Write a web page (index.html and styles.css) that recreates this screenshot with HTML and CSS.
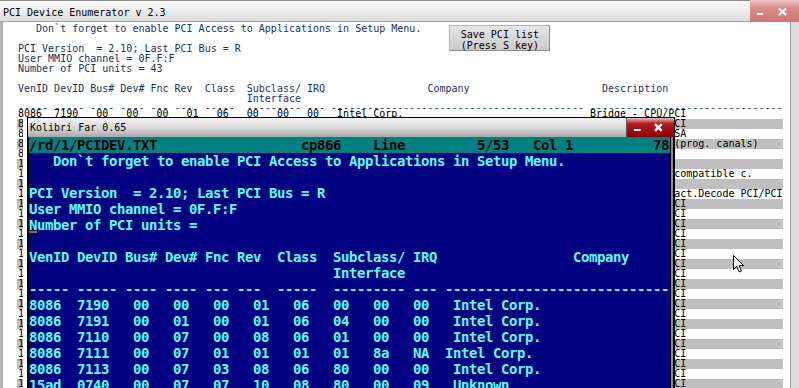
FILE: index.html
```html
<!DOCTYPE html>
<html>
<head>
<meta charset="utf-8">
<link rel="stylesheet" href="styles.css">
</head>
<body>
<div class="desk">
  <div class="win">
    <div class="tbar">
      <span class="ttl">PCI Device Enumerator v 2.3</span>
      <svg class="wbtn" width="49" height="22" viewBox="0 0 49 22">
        <rect x="7" y="13" width="6" height="2" fill="#fff"/>
        <path d="M29 8.5 L36 15 M36 8.5 L29 15" stroke="#fff" stroke-width="2.2"/>
      </svg>
    </div>
    <div class="frame">
      <div class="panel">
        <div class="ln first"><span>   Don`t forget to enable PCI Access to Applications in Setup Menu.</span><button class="save">Save PCI list
(Press S key)</button></div>
        <div class="ln"> </div>
        <div class="ln">PCI Version  = 2.10; Last PCI Bus = R</div>
        <div class="ln">User MMIO channel = 0F.F:F</div>
        <div class="ln">Number of PCI units = 43</div>
        <div class="ln"> </div>
        <div class="ln"><span class="hc1">VenID DevID Bus# Dev# Fnc Rev  Class  Subclass/ IRQ</span><span class="hc2">Company</span><span>Description</span></div>
        <div class="ln">                                      Interface</div>
        <div class="ln dash">----- ----- ---- ---- --- ---  -----  --------- --- ------------------------------------------ --------------------------------</div>
        <div class="rows">
          <div class="row"><span class="m">8086  7190   00   00   00   01   06   00   00   00   Intel Corp.</span><span>Bridge - CPU/PCI</span></div>
          <div class="row"><span class="m">8086  7191   00   01   00   01   06   04   00   00   Intel Corp.</span><span>Bridge - PCI/PCI</span></div>
          <div class="row"><span class="m">8086  7110   00   07   00   08   06   01   00   00   Intel Corp.</span><span>Bridge - PCI/ISA</span></div>
          <div class="row"><span class="m">8086  7111   00   07   01   01   01   01   8a   NA  Intel Corp.</span><span>Storage - IDE (prog. canals)</span></div>
          <div class="row"><span class="m">8086  7113   00   07   03   08   06   80   00   00   Intel Corp.</span><span>Bridge - Other</span></div>
          <div class="row"><span class="m">15ad  0740   00   07   07   10   08   80   00   09   Unknown</span><span>Unknown device</span></div>
          <div class="row"><span class="m">15ad  0405   00   0f   00   00   03   00   00   0b   VMware</span><span>Display - VGA compatible c.</span></div>
          <div class="row"><span class="m">15ad  0790   00   10   00   02   01   00   00   0b   VMware</span><span>Unknown device</span></div>
          <div class="row"><span class="m">15ad  0790   00   11   00   02   06   04   01   00   VMware</span><span>Bridge - Subtract.Decode PCI/PCI</span></div>
          <div class="row"><span class="m">15ad  07a0   00   15   00   01   06   04   00   00   VMware</span><span>Bridge - PCI/PCI</span></div>
          <div class="row"><span class="m">15ad  07a0   00   15   01   01   06   04   00   00   VMware</span><span>Bridge - PCI/PCI</span></div>
          <div class="row"><span class="m">15ad  07a0   00   15   02   01   06   04   00   00   VMware</span><span>Bridge - PCI/PCI</span></div>
          <div class="row"><span class="m">15ad  07a0   00   15   03   01   06   04   00   00   VMware</span><span>Bridge - PCI/PCI</span></div>
          <div class="row"><span class="m">15ad  07a0   00   15   04   01   06   04   00   00   VMware</span><span>Bridge - PCI/PCI</span></div>
          <div class="row"><span class="m">15ad  07a0   00   15   05   01   06   04   00   00   VMware</span><span>Bridge - PCI/PCI</span></div>
          <div class="row"><span class="m">15ad  07a0   00   15   06   01   06   04   00   00   VMware</span><span>Bridge - PCI/PCI</span></div>
          <div class="row"><span class="m">15ad  07a0   00   15   07   01   06   04   00   00   VMware</span><span>Bridge - PCI/PCI</span></div>
          <div class="row"><span class="m">15ad  07a0   00   16   00   01   06   04   00   00   VMware</span><span>Bridge - PCI/PCI</span></div>
          <div class="row"><span class="m">15ad  07a0   00   16   01   01   06   04   00   00   VMware</span><span>Bridge - PCI/PCI</span></div>
          <div class="row"><span class="m">15ad  07a0   00   16   02   01   06   04   00   00   VMware</span><span>Bridge - PCI/PCI</span></div>
          <div class="row"><span class="m">15ad  07a0   00   16   03   01   06   04   00   00   VMware</span><span>Bridge - PCI/PCI</span></div>
          <div class="row"><span class="m">15ad  07a0   00   16   04   01   06   04   00   00   VMware</span><span>Bridge - PCI/PCI</span></div>
          <div class="row"><span class="m">15ad  07a0   00   16   05   01   06   04   00   00   VMware</span><span>Bridge - PCI/PCI</span></div>
          <div class="row"><span class="m">15ad  07a0   00   16   06   01   06   04   00   00   VMware</span><span>Bridge - PCI/PCI</span></div>
          <div class="row"><span class="m">15ad  07a0   00   16   07   01   06   04   00   00   VMware</span><span>Bridge - PCI/PCI</span></div>
          <div class="row"><span class="m">15ad  07a0   00   17   00   01   06   04   00   00   VMware</span><span>Bridge - PCI/PCI</span></div>
          <div class="row"><span class="m">15ad  07a0   00   17   01   01   06   04   00   00   VMware</span><span>Bridge - PCI/PCI</span></div>
          <div class="row"><span class="m">15ad  07a0   00   17   02   01   06   04   00   00   VMware</span><span>Bridge - PCI/PCI</span></div>
        </div>
      </div>
      <div class="rframe"></div>
    </div>
  </div>

  <div class="far">
    <div class="ftbar">
      <span class="fttl">Kolibri Far 0.65</span>
      <svg class="fbtn" width="48" height="19" viewBox="0 0 48 19">
        <rect x="7" y="11" width="7" height="2" fill="#fff"/>
        <path d="M28.5 6 L35.5 13 M35.5 6 L28.5 13" stroke="#fff" stroke-width="2.4"/>
      </svg>
    </div>
    <div class="fbody">
      <div class="fmain">
        <div class="status">/rd/1/PCIDEV.TXT                  cp866    Line         5/53   Col 1          78</div>
        <div class="fl">   Don`t forget to enable PCI Access to Applications in Setup Menu.</div>
        <div class="fl"> </div>
        <div class="fl">PCI Version  = 2.10; Last PCI Bus = R</div>
        <div class="fl">User MMIO channel = 0F.F:F</div>
        <div class="fl"><span class="cur">N</span>umber of PCI units =</div>
        <div class="fl"> </div>
        <div class="fl">VenID DevID Bus# Dev# Fnc Rev  Class  Subclass/ IRQ                 Company</div>
        <div class="fl">                                      Interface</div>
        <div class="fl">----- ----- ---- ---- --- ---  -----  --------- --- ----------------------------</div>
        <div class="fl">8086  7190   00   00   00   01   06   00   00   00   Intel Corp.</div>
        <div class="fl">8086  7191   00   01   00   01   06   04   00   00   Intel Corp.</div>
        <div class="fl">8086  7110   00   07   00   08   06   01   00   00   Intel Corp.</div>
        <div class="fl">8086  7111   00   07   01   01   01   01   8a   NA  Intel Corp.</div>
        <div class="fl">8086  7113   00   07   03   08   06   80   00   00   Intel Corp.</div>
        <div class="fl">15ad  0740   00   07   07   10   08   80   00   09   Unknown</div>
      </div>
      <div class="fscroll"></div>
    </div>
  </div>

  <svg class="mouse" width="13" height="20" viewBox="0 0 13 20">
    <path d="M0.5 0.5 L0.5 14.5 L3.8 11.4 L6.2 17 L8.4 16 L6.1 10.6 L10.6 10.6 Z" fill="#fff" stroke="#000" stroke-width="1"/>
  </svg>
</div>
</body>
</html>
```

FILE: styles.css
```css
html, body {
  margin: 0;
  padding: 0;
  width: 799px;
  height: 388px;
  overflow: hidden;
  background: #d8d8d8;
}

.desk {
  position: relative;
  width: 799px;
  height: 388px;
  font-family: "DejaVu Sans Mono", monospace;
  font-size: 10px;
}

.win {
  display: flex;
  flex-direction: column;
  height: 388px;
}

.tbar {
  box-sizing: border-box;
  height: 22px;
  flex: none;
  border-top: 1px solid #8c8c8c;
  border-bottom: 1px solid #a4a4a4;
  background: linear-gradient(#fcfcfc, #dddddd);
  display: flex;
  justify-content: space-between;
}

.ttl {
  padding: 7px 0 0 3px;
  line-height: 10px;
  color: #000;
  white-space: pre;
}

.wbtn {
  display: block;
  margin-top: -1px;
  background: linear-gradient(#f1c8c8, #da8c8c 35%, #cf7474);
}

.frame {
  display: flex;
  flex: 1;
  min-height: 0;
}

.panel {
  box-sizing: border-box;
  width: 790px;
  border-left: 3px solid #b4b4b4;
  background: #fff;
  padding: 2px 0 0 15px;
  overflow: hidden;
}

.rframe {
  flex: 1;
  border-left: 1px solid #a0a0a0;
  background: #dcdcdc;
}

.ln {
  height: 10px;
  line-height: 10px;
  white-space: pre;
  color: #17345e;
}

.first {
  display: flex;
  align-items: flex-start;
}

.save {
  flex: none;
  box-sizing: border-box;
  width: 101px;
  height: 26px;
  margin: 1px 0 0 28px;
  padding: 3px 0 0;
  border: 1px solid;
  border-color: #b4b4b4 #8a8a8a #8a8a8a #b4b4b4;
  background: linear-gradient(#e6e6e6, #cbcbcb);
  font: 10px/11px "DejaVu Sans Mono", monospace;
  color: #000;
  text-align: center;
  white-space: pre;
}

.hc1 { display: inline-block; width: 68ch; }
.hc2 { display: inline-block; width: 29ch; }

.dash {
  height: 5px;
  line-height: 7px;
}

.rows .row {
  box-sizing: border-box;
  height: 10px;
  line-height: 10px;
  white-space: pre;
  margin-left: -1px;
  padding-left: 1px;
  width: 766px;
  color: #000;
  overflow: hidden;
}

.rows .row:nth-child(even) {
  background: #c0c0c0;
}

.m {
  display: inline-block;
  width: 95ch;
}

/* Kolibri Far window */
.far {
  position: absolute;
  left: 27px;
  top: 117px;
  width: 648px;
  height: 290px;
  box-sizing: border-box;
  border: 1px solid #000;
  background: #000;
  display: flex;
  flex-direction: column;
  box-shadow: -4px 1px 0 #fff;
}

.ftbar {
  flex: none;
  height: 19px;
  background: linear-gradient(#f4f4f4, #d6d6d6 55%, #a8a8a8);
  display: flex;
  justify-content: space-between;
}

.fttl {
  padding: 5px 0 0 2px;
  line-height: 10px;
  color: #000;
  white-space: pre;
}

.fbtn {
  display: block;
  box-sizing: border-box;
  border-left: 1px solid #5a5a5a;
  background: linear-gradient(#eabcbc, #b21c1c 30%, #8a0000);
}

.fbody {
  display: flex;
  flex: 1;
  min-height: 0;
}

.fmain {
  margin-left: 1px;
  width: 641px;
  background: #000080;
  overflow: hidden;
  font: bold 14px "DejaVu Sans Mono", monospace;
  letter-spacing: -0.43px;
}

.fscroll {
  width: 2px;
  border-left: 1px solid #000;
  border-right: 1px solid #000;
  background: #8a8a8a;
}

.status {
  height: 16px;
  line-height: 16px;
  background: #008080;
  color: #000;
  white-space: pre;
}

.fl {
  height: 16px;
  line-height: 16px;
  color: #55ffff;
  white-space: pre;
}

.cur {
  background: linear-gradient(transparent 14px, #808000 14px, #808000 16px, transparent 16px);
}

.mouse {
  position: absolute;
  left: 733px;
  top: 255px;
}
```
